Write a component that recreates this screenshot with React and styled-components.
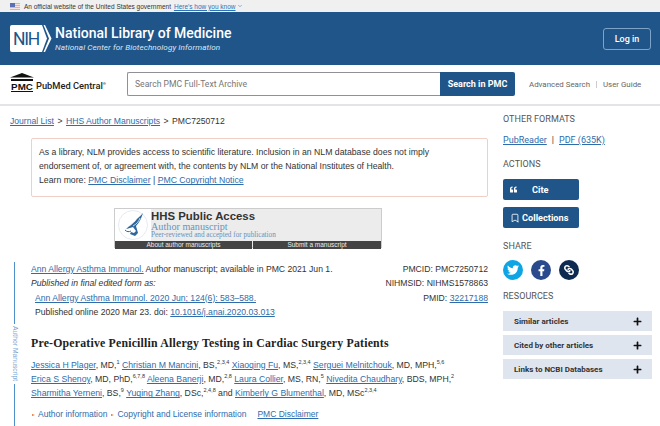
import React from 'react';
import styled, { createGlobalStyle } from 'styled-components';
import { FaTwitter, FaFacebookF, FaLink, FaPlus, FaQuoteLeft } from 'react-icons/fa';
import { Bookmark, ChevronDown } from 'lucide-react';

const GlobalStyle = createGlobalStyle`
html, body { margin: 0; padding: 0; background: #fff; }
body { font-family: "Liberation Sans", Arial, sans-serif; color: #333; }
* { box-sizing: border-box; }
`;

const Page = styled.div`
width: 660px;
height: 426px;
overflow: hidden;
`;

const GovBanner = styled.div`
height: 12px;
background: #f0f0f0;
display: flex;
align-items: center;
padding-left: 10px;
font-size: 6.5px;
color: #333;
`;

const GovText = styled.span`
margin-left: 4px;
`;

const GovLink = styled.a`
margin-left: 3px;
color: #2e73b8;
text-decoration: underline;
`;

const GovChevron = styled(ChevronDown)`
margin-left: 1px;
color: #2e73b8;
`;

const Masthead = styled.header`
height: 53px;
background: #20558a;
display: flex;
align-items: center;
justify-content: space-between;
padding: 0 9px 0 10px;
`;

const Brand = styled.div`
display: flex;
align-items: center;
gap: 3px;
color: #fff;
`;

const NihMark = styled.div`
position: relative;
width: 42px;
height: 27px;
`;

const NihLetters = styled.span`
position: absolute;
left: 3px;
top: 4px;
font: 400 17.5px/20px Roboto, sans-serif;
letter-spacing: -1.2px;
color: #20558a;
`;

const BrandTitle = styled.div`
font: 500 14px/16px Roboto, sans-serif;
`;

const BrandSub = styled.div`
margin-top: 1px;
font: italic 400 8.1px/10px Roboto, sans-serif;
letter-spacing: 0.1px;
color: #dbe6f0;
`;

const LoginButton = styled.button`
width: 48px;
height: 22px;
border: 1px solid #7fa3c6;
border-radius: 3px;
background: transparent;
color: #fff;
font: 500 9px Roboto, sans-serif;
`;

const SearchBar = styled.div`
height: 41px;
border-bottom: 2px solid #e4e4e6;
display: flex;
align-items: center;
padding: 0 0 2px 10px;
`;

const PmcLogo = styled.div`
width: 117px;
height: 20px;
margin-bottom: 4px;
display: flex;
align-items: flex-end;
gap: 2px;
`;

const PmcMark = styled.div`
display: flex;
flex-direction: column;
align-items: center;
width: 24px;
`;

const PmcLetters = styled.span`
font: 700 9.8px/9px "Liberation Sans", sans-serif;
color: #111;
border-bottom: 1px solid #111;
`;

const PmcName = styled.span`
padding-bottom: 1px;
font: 500 9.3px/10px Roboto, sans-serif;
color: #222;
sup {
  font-size: 4px;
  line-height: 0;
}
`;

const SearchForm = styled.div`
width: 388px;
height: 24px;
display: flex;
`;

const SearchInput = styled.div`
flex: 1;
border: 1px solid #909096;
border-right: none;
border-radius: 2px 0 0 2px;
font: 400 8.6px/22px Roboto, sans-serif;
color: #777;
padding-left: 7px;
`;

const SearchButton = styled.button`
width: 75px;
border: none;
border-radius: 0 2px 2px 0;
background: #20558a;
color: #fff;
font: 700 9px Roboto, sans-serif;
`;

const SearchLinks = styled.div`
display: flex;
align-items: center;
margin: 2px 0 0 14px;
font: 400 7.9px Roboto, sans-serif;
color: #666;
`;

const SearchDivider = styled.span`
width: 1px;
height: 7px;
margin: 0 6px;
background: #ccc;
`;

const Content = styled.div`
display: grid;
grid-template-columns: 503px 157px;
`;

const Main = styled.main`
padding: 9px 0 0 10px;
`;

const Link = styled.a`
color: #2e6cab;
text-decoration: underline;
`;

const Crumbs = styled.nav`
font: 400 8.6px/12px "Liberation Sans", sans-serif;
display: flex;
gap: 3.5px;
`;

const Notice = styled.div`
margin: 11px 0 0 21px;
width: 457px;
height: 59px;
border: 1px solid #f0cfc4;
border-radius: 2px;
padding: 6px 7px;
font-size: 8.7px;
line-height: 14.2px;
`;

const AccessBanner = styled.div`
margin: 11px 0 0 104px;
width: 268px;
height: 40px;
border: 1px solid #ccc;
background: #ececec;
display: flex;
flex-direction: column;
`;

const AccessTop = styled.div`
flex: 1;
display: flex;
`;

const EagleCell = styled.div`
width: 36px;
background: #fff;
display: flex;
align-items: center;
justify-content: center;
`;

const AccessText = styled.div`
padding-top: 2px;
`;

const AccessTitle = styled.div`
font: 700 11.4px/11px "Liberation Sans", sans-serif;
color: #333;
`;

const AccessScript = styled.div`
font: 400 10.2px/10px "Liberation Serif", serif;
color: #6a92ba;
`;

const AccessNote = styled.div`
font: 400 7.2px/7px "Liberation Serif", serif;
color: #6a92ba;
`;

const AccessLinks = styled.div`
display: grid;
grid-template-columns: 137px 1fr;
gap: 1px;
height: 8px;
`;

const AccessLink = styled.span`
background: #444;
color: #eee;
font-size: 6.5px;
line-height: 8px;
text-align: center;
`;

const Article = styled.article`
display: flex;
margin-top: 14px;
`;

const Rail = styled.div`
width: 21px;
height: 200px;
display: flex;
flex-direction: column;
align-items: flex-start;
padding-left: 3px;
`;

const RailLine = styled.span`
width: 1px;
background: #4f8fca;
height: ${({ $size }) => ($size ? `${$size}px` : 'auto')};
flex: ${({ $size }) => ($size ? 'none' : 1)};
margin-left: 1px;
`;

const RailText = styled.span`
writing-mode: vertical-rl;
font-size: 6.8px;
line-height: 6px;
color: #7aa6d2;
margin: 2px 0 3px -1px;
`;

const ArticleBody = styled.div`
width: 457px;
`;

const MetaRow = styled.div`
display: flex;
justify-content: space-between;
font-size: 8.65px;
line-height: 14.4px;
`;

const MetaLine = styled.div`
padding-left: ${({ $indent }) => ($indent ? '4px' : '0')};
font-style: ${({ $italic }) => ($italic ? 'italic' : 'normal')};
`;

const Ids = styled.div`
text-align: right;
`;

const Title = styled.h1`
margin: 16px 0 0;
font: 700 11.8px/15px "Liberation Serif", serif;
letter-spacing: 0.2px;
color: #222;
`;

const Authors = styled.p`
margin: 7px 0 0;
font-size: 8.7px;
line-height: 14.4px;
sup {
  font-size: 5.5px;
  line-height: 0;
}
`;

const InfoRow = styled.div`
margin-top: 7px;
display: flex;
font-size: 8.5px;
line-height: 12px;
color: #2e6cab;
`;

const InfoItem = styled.span`
margin-right: ${({ $gap }) => $gap}px;
&::before {
  content: '';
  display: inline-block;
  margin: 0 3px 1px 1px;
  border-left: 3px solid #e0762e;
  border-top: 1.5px solid transparent;
  border-bottom: 1.5px solid transparent;
}
`;

const PlainLink = styled(Link)`
margin-left: 4px;
`;

const Sidebar = styled.aside`
padding-top: 8px;
width: 149px;
`;

const SideHeading = styled.h2`
margin: ${({ $top }) => $top}px 0 0;
font: 400 9px/11px Roboto, sans-serif;
color: #555;
letter-spacing: 0.05px;
`;

const Formats = styled.div`
margin-top: 10px;
font: 400 9px/11px Roboto, sans-serif;
display: flex;
gap: 5px;
color: #333;
`;

const ActionButton = styled.button`
display: flex;
align-items: center;
width: 76px;
height: 21px;
margin-top: ${({ $top }) => $top}px;
padding: 0 0 0 ${({ $left }) => $left}px;
border: none;
border-radius: 2px;
background: #20558a;
color: #fff;
font: 700 9.2px Roboto, sans-serif;
`;

const ActionLabel = styled.span`
margin-left: ${({ $left }) => $left}px;
`;

const ShareRow = styled.div`
margin-top: 8px;
display: flex;
gap: 8px;
`;

const ShareCircle = styled.a`
width: 20px;
height: 20px;
border-radius: 50%;
background: ${({ $bg }) => $bg};
color: #fff;
display: flex;
align-items: center;
justify-content: center;
font-size: ${({ $size }) => $size}px;
`;

const ChainIcon = styled(FaLink)`
transform: rotate(90deg);
`;

const ResourceList = styled.div`
margin-top: 9px;
display: flex;
flex-direction: column;
gap: 4px;
`;

const ResourceRow = styled.div`
height: 20px;
background: #dfe5ef;
display: flex;
align-items: center;
justify-content: space-between;
padding: 0 10px 0 11px;
font: 700 8px Roboto, sans-serif;
color: #333;
svg {
  color: #111;
  font-size: 9px;
}
`;

const UsFlag = () => (
  <svg width="10" height="7" viewBox="0 0 10 7">
    <rect width="10" height="7" fill="#f2a9a4" />
    <rect y="1" width="10" height="1" fill="#f7e3e0" />
    <rect y="3" width="10" height="1" fill="#f7e3e0" />
    <rect y="5" width="10" height="1" fill="#f7e3e0" />
    <rect width="5" height="4" fill="#5b6fb5" />
  </svg>
);

const NihLogo = () => (
  <NihMark>
    <svg width="42" height="27" viewBox="0 0 42 27">
      <path d="M2 0H32L37 13.5L32 27H2Q0 27 0 25V2Q0 0 2 0Z" fill="#fff" />
      <path d="M35 0L41.5 13.5L35 27H33.5L39 13.5L33.5 0Z" fill="#fff" />
    </svg>
    <NihLetters>NIH</NihLetters>
  </NihMark>
);

const PmcRoof = () => (
  <svg width="24" height="9" viewBox="0 0 24 9">
    <path d="M12 0L24 4.5H0Z" fill="#111" />
    <rect x="1" y="6" width="22" height="2" fill="#111" />
  </svg>
);

const Eagle = () => (
  <svg width="32" height="32" viewBox="0 0 32 32">
    <circle cx="16" cy="16" r="14.5" fill="none" stroke="#d8e2ec" strokeWidth="0.7" />
    <path d="M26 4C23 8 20 9 18 12C15 15 12 17 9 20C12 19 14 19 16 18L19 22L17 24L14 23L13 25L18 27L21 24L19 17C22 14 24 10 26 4Z" fill="#2f679d" />
    <path d="M21 7C20 10 17 14 12 17M23 9C22 12 20 15 16 17" stroke="#fff" strokeWidth="0.7" fill="none" />
    <path d="M8 21C10 23 12 23 14 22" stroke="#2f679d" strokeWidth="1" fill="none" />
  </svg>
);

const App = () => (
  <Page>
    <GlobalStyle />
    <GovBanner>
      <UsFlag />
      <GovText>An official website of the United States government</GovText>
      <GovLink>Here&apos;s how you know</GovLink>
      <GovChevron size={6} />
    </GovBanner>
    <Masthead>
      <Brand>
        <NihLogo />
        <div>
          <BrandTitle>National Library of Medicine</BrandTitle>
          <BrandSub>National Center for Biotechnology Information</BrandSub>
        </div>
      </Brand>
      <LoginButton>Log in</LoginButton>
    </Masthead>
    <SearchBar>
      <PmcLogo>
        <PmcMark>
          <PmcRoof />
          <PmcLetters>PMC</PmcLetters>
        </PmcMark>
        <PmcName>PubMed Central<sup>®</sup></PmcName>
      </PmcLogo>
      <SearchForm>
        <SearchInput>Search PMC Full-Text Archive</SearchInput>
        <SearchButton>Search in PMC</SearchButton>
      </SearchForm>
      <SearchLinks>
        <span>Advanced Search</span>
        <SearchDivider />
        <span>User Guide</span>
      </SearchLinks>
    </SearchBar>
    <Content>
      <Main>
        <Crumbs>
          <Link>Journal List</Link>
          <span>&gt;</span>
          <Link>HHS Author Manuscripts</Link>
          <span>&gt;</span>
          <span>PMC7250712</span>
        </Crumbs>
        <Notice>
          As a library, NLM provides access to scientific literature. Inclusion in an NLM database does not imply
          endorsement of, or agreement with, the contents by NLM or the National Institutes of Health.
          <br />
          Learn more: <Link>PMC Disclaimer</Link> | <Link>PMC Copyright Notice</Link>
        </Notice>
        <AccessBanner>
          <AccessTop>
            <EagleCell><Eagle /></EagleCell>
            <AccessText>
              <AccessTitle>HHS Public Access</AccessTitle>
              <AccessScript>Author manuscript</AccessScript>
              <AccessNote>Peer-reviewed and accepted for publication</AccessNote>
            </AccessText>
          </AccessTop>
          <AccessLinks>
            <AccessLink>About author manuscripts</AccessLink>
            <AccessLink>Submit a manuscript</AccessLink>
          </AccessLinks>
        </AccessBanner>
        <Article>
          <Rail>
            <RailLine $size={62} />
            <RailText>Author Manuscript</RailText>
            <RailLine />
          </Rail>
          <ArticleBody>
            <MetaRow>
              <div>
                <MetaLine><Link>Ann Allergy Asthma Immunol.</Link> Author manuscript; available in PMC 2021 Jun 1.</MetaLine>
                <MetaLine $italic>Published in final edited form as:</MetaLine>
                <MetaLine $indent><Link>Ann Allergy Asthma Immunol. 2020 Jun; 124(6): 583–588.</Link></MetaLine>
                <MetaLine $indent>Published online 2020 Mar 23. doi: <Link>10.1016/j.anai.2020.03.013</Link></MetaLine>
              </div>
              <Ids>
                <div>PMCID: PMC7250712</div>
                <div>NIHMSID: NIHMS1578863</div>
                <div>PMID: <Link>32217188</Link></div>
              </Ids>
            </MetaRow>
            <Title>Pre-Operative Penicillin Allergy Testing in Cardiac Surgery Patients</Title>
            <Authors>
              <Link>Jessica H Plager</Link>, MD,<sup>1</sup> <Link>Christian M Mancini</Link>, BS,<sup>2,3,4</sup> <Link>Xiaoqing Fu</Link>, MS,<sup>2,3,4</sup> <Link>Serguei Melnitchouk</Link>, MD, MPH,<sup>5,6</sup>
              <br />
              <Link>Erica S Shenoy</Link>, MD, PhD,<sup>6,7,8</sup> <Link>Aleena Banerji</Link>, MD,<sup>2,8</sup> <Link>Laura Collier</Link>, MS, RN,<sup>5</sup> <Link>Nivedita Chaudhary</Link>, BDS, MPH,<sup>2</sup>
              <br />
              <Link>Sharmitha Yerneni</Link>, BS,<sup>9</sup> <Link>Yuqing Zhang</Link>, DSc,<sup>2,4,8</sup> and <Link>Kimberly G Blumenthal</Link>, MD, MSc<sup>2,3,4</sup>
            </Authors>
            <InfoRow>
              <InfoItem $gap={3}>Author information</InfoItem>
              <InfoItem $gap={7}>Copyright and License information</InfoItem>
              <PlainLink>PMC Disclaimer</PlainLink>
            </InfoRow>
          </ArticleBody>
        </Article>
      </Main>
      <Sidebar>
        <SideHeading $top={0}>OTHER FORMATS</SideHeading>
        <Formats>
          <Link>PubReader</Link>
          <span>|</span>
          <Link>PDF (635K)</Link>
        </Formats>
        <SideHeading $top={13}>ACTIONS</SideHeading>
        <ActionButton $top={9} $left={7}>
          <FaQuoteLeft size={7} />
          <ActionLabel $left={15}>Cite</ActionLabel>
        </ActionButton>
        <ActionButton $top={7} $left={7}>
          <Bookmark size={10} />
          <ActionLabel $left={2}>Collections</ActionLabel>
        </ActionButton>
        <SideHeading $top={13}>SHARE</SideHeading>
        <ShareRow>
          <ShareCircle $bg="#0ea5e5" $size={12}><FaTwitter /></ShareCircle>
          <ShareCircle $bg="#2a4a8d" $size={11}><FaFacebookF /></ShareCircle>
          <ShareCircle $bg="#0d2a50" $size={10}><ChainIcon /></ShareCircle>
        </ShareRow>
        <SideHeading $top={11}>RESOURCES</SideHeading>
        <ResourceList>
          <ResourceRow>Similar articles<FaPlus /></ResourceRow>
          <ResourceRow>Cited by other articles<FaPlus /></ResourceRow>
          <ResourceRow>Links to NCBI Databases<FaPlus /></ResourceRow>
        </ResourceList>
      </Sidebar>
    </Content>
  </Page>
);

export default App;
